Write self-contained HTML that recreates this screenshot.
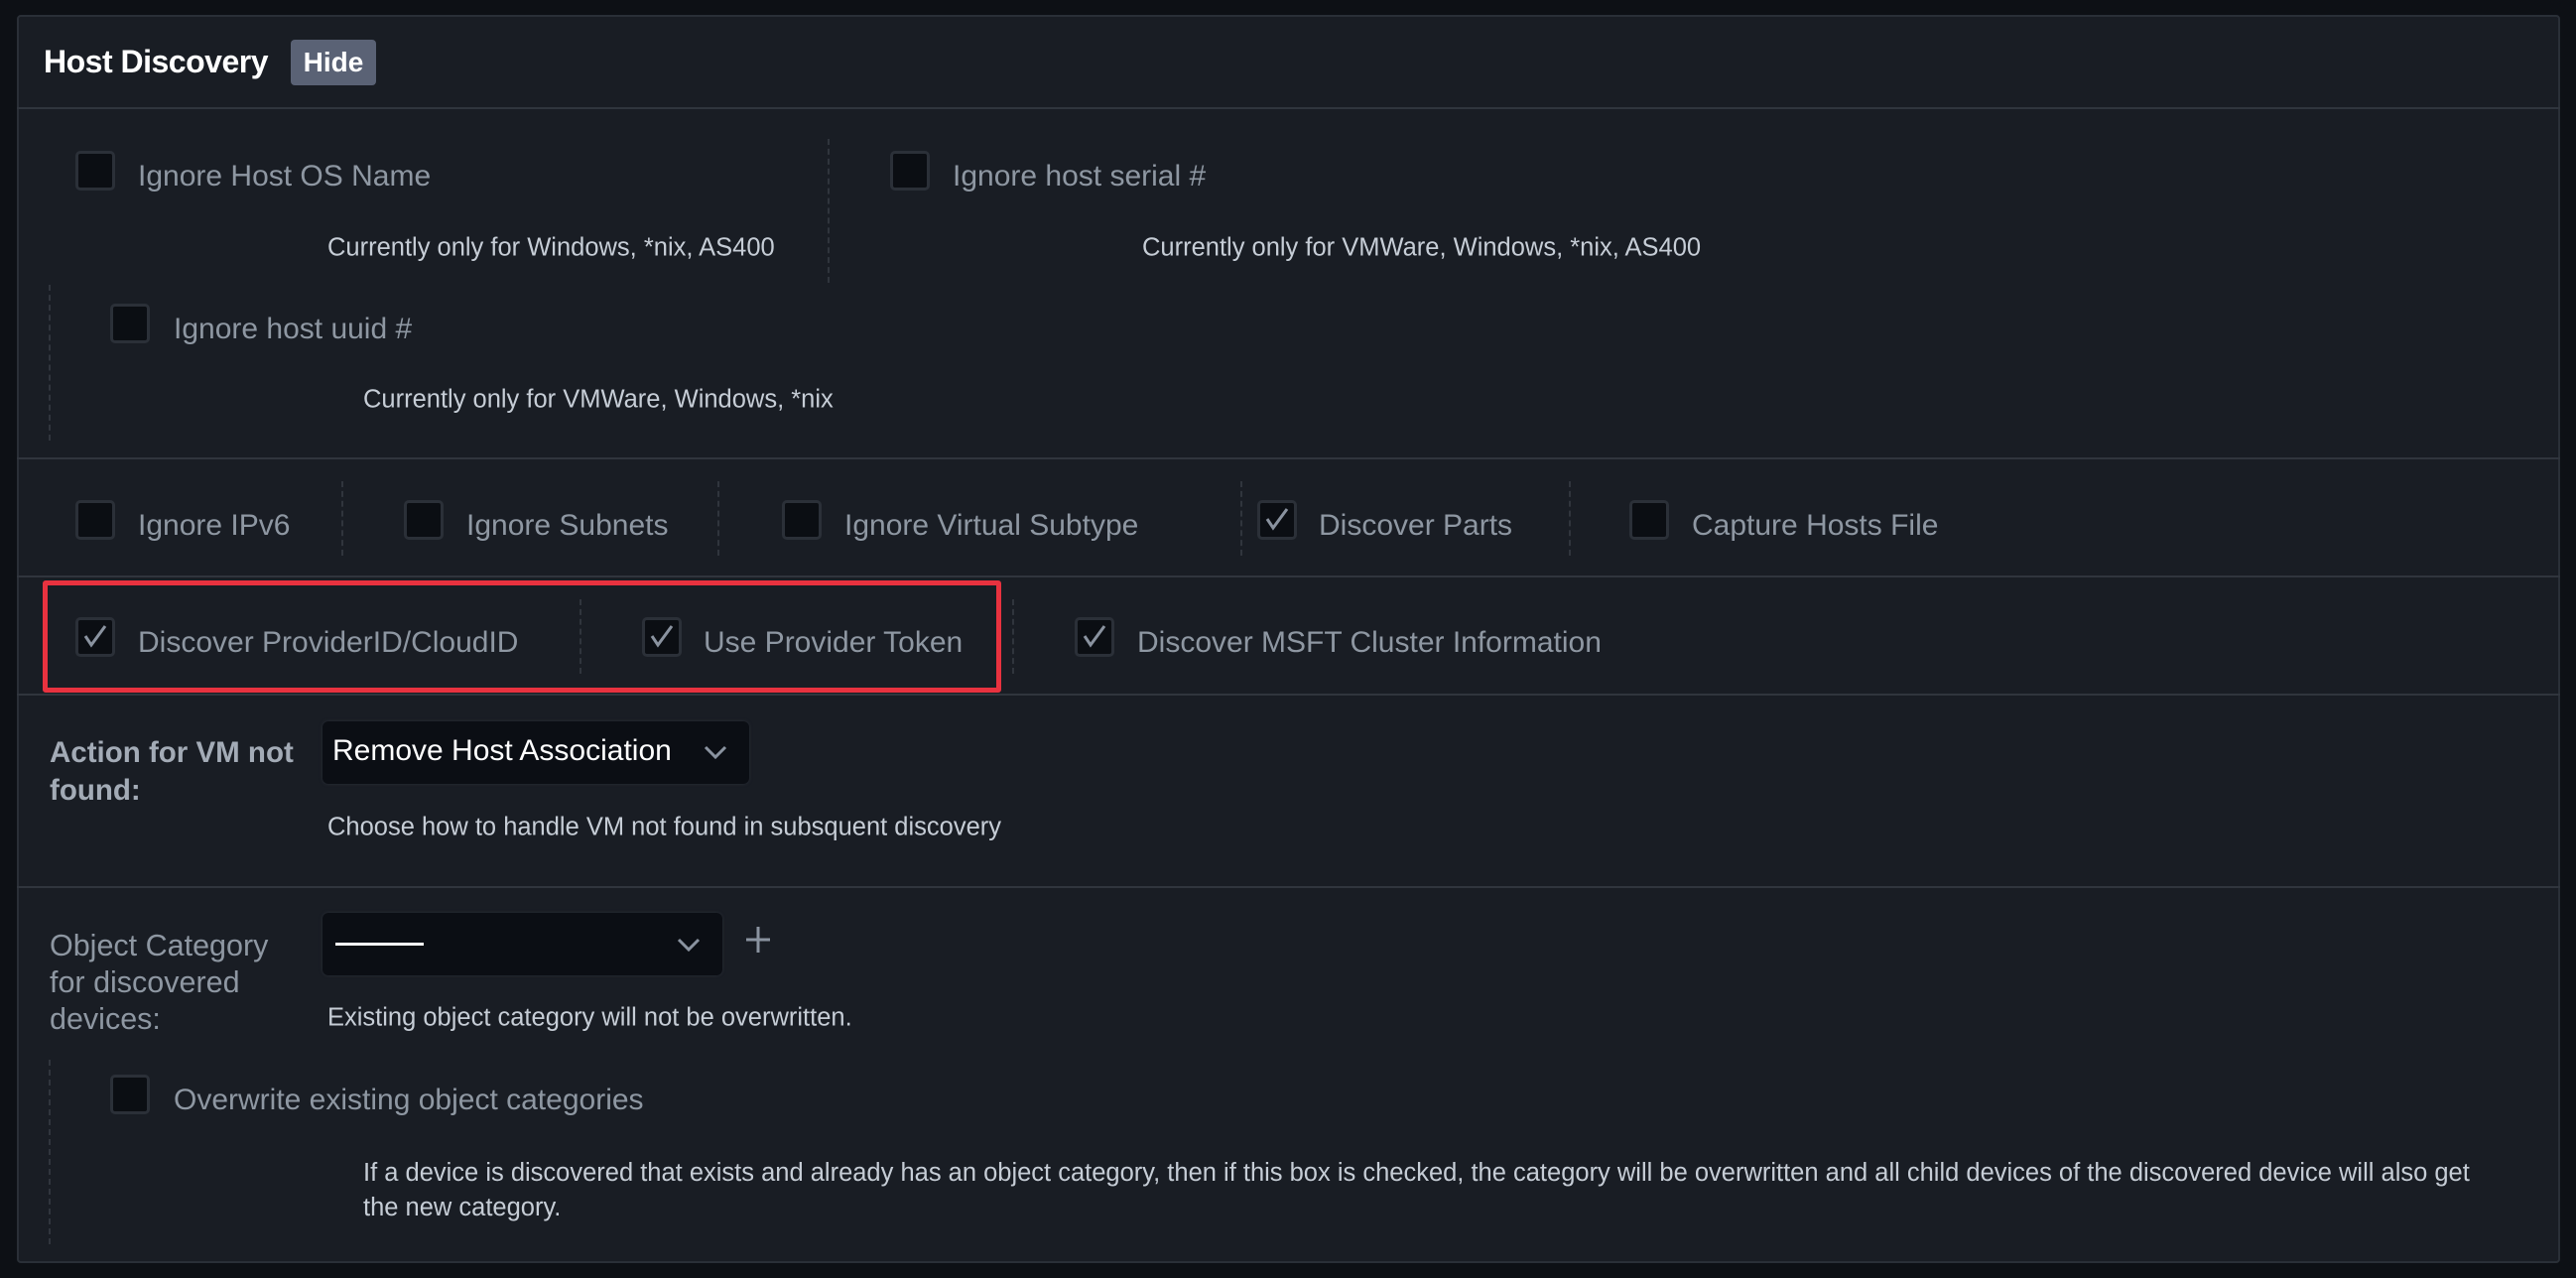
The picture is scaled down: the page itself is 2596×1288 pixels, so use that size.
<!DOCTYPE html>
<html><head><meta charset="utf-8"><style>
*{margin:0;padding:0;box-sizing:border-box}
body{width:2596px;height:1288px;background:#0d1015;font-family:"Liberation Sans",sans-serif;position:relative;overflow:hidden}
.panel{position:absolute;left:17px;top:15px;width:2563px;height:1258px;background:#191d24;border:2px solid #2a2f37;border-radius:4px}
.a{position:absolute;white-space:nowrap}
.hr{position:absolute;left:17px;width:2563px;height:2px;background:#30353d}
.dv{position:absolute;width:0;border-left:2px dashed #30353d}
.cb{position:absolute;width:40px;height:40px;background:#0b0e13;border:3px solid #2b3038;border-radius:5px}
.cb svg{position:absolute;left:3px;top:2px}
.lb{position:absolute;white-space:nowrap;font-size:30px;color:#8e97a2;transform:translateY(-50%)}
.sub{position:absolute;white-space:nowrap;font-size:25.5px;color:#c6cdd6;transform:translateY(-50%)}
.sel{position:absolute;background:#0b0e14;border-radius:6px;box-shadow:0 0 3px #2b3038}
</style></head><body>
<div class="panel"></div>
<div class="a" style="left:44px;top:44px;font-size:32px;font-weight:bold;color:#fff;letter-spacing:-0.5px">Host Discovery</div>
<div class="a" style="left:293px;top:40px;width:86px;height:46px;background:#5a6275;border-radius:4px;color:#fff;font-weight:bold;font-size:28px;text-align:center;line-height:46px">Hide</div>
<div class="hr" style="top:108px"></div>

<div class="cb" style="left:76px;top:152px"></div>
<div class="lb" style="left:139px;top:178px">Ignore Host OS Name</div>
<div class="sub" style="left:330px;top:250px">Currently only for Windows, *nix, AS400</div>
<div class="dv" style="left:834px;top:140px;height:145px"></div>
<div class="cb" style="left:897px;top:152px"></div>
<div class="lb" style="left:960px;top:178px">Ignore host serial #</div>
<div class="sub" style="left:1151px;top:250px">Currently only for VMWare, Windows, *nix, AS400</div>
<div class="dv" style="left:49px;top:287px;height:157px"></div>
<div class="cb" style="left:111px;top:306px"></div>
<div class="lb" style="left:175px;top:332px">Ignore host uuid #</div>
<div class="sub" style="left:366px;top:403px">Currently only for VMWare, Windows, *nix</div>
<div class="hr" style="top:461px"></div>

<div class="cb" style="left:76px;top:504px"></div>
<div class="lb" style="left:139px;top:530px">Ignore IPv6</div>
<div class="dv" style="left:344px;top:485px;height:75px"></div>
<div class="cb" style="left:407px;top:504px"></div>
<div class="lb" style="left:470px;top:530px">Ignore Subnets</div>
<div class="dv" style="left:723px;top:485px;height:75px"></div>
<div class="cb" style="left:788px;top:504px"></div>
<div class="lb" style="left:851px;top:530px">Ignore Virtual Subtype</div>
<div class="dv" style="left:1250px;top:485px;height:75px"></div>
<div class="cb" style="left:1267px;top:504px"><svg width="30" height="30" viewBox="0 0 30 30"><path d="M4 14 L10 23 L24 4" fill="none" stroke="#8a93a0" stroke-width="3"/></svg></div>
<div class="lb" style="left:1329px;top:530px">Discover Parts</div>
<div class="dv" style="left:1581px;top:485px;height:75px"></div>
<div class="cb" style="left:1642px;top:504px"></div>
<div class="lb" style="left:1705px;top:530px">Capture Hosts File</div>
<div class="hr" style="top:580px"></div>

<div class="cb" style="left:76px;top:622px"><svg width="30" height="30" viewBox="0 0 30 30"><path d="M4 14 L10 23 L24 4" fill="none" stroke="#8a93a0" stroke-width="3"/></svg></div>
<div class="lb" style="left:139px;top:648px">Discover ProviderID/CloudID</div>
<div class="dv" style="left:584px;top:604px;height:75px"></div>
<div class="cb" style="left:647px;top:622px"><svg width="30" height="30" viewBox="0 0 30 30"><path d="M4 14 L10 23 L24 4" fill="none" stroke="#8a93a0" stroke-width="3"/></svg></div>
<div class="lb" style="left:709px;top:648px">Use Provider Token</div>
<div class="dv" style="left:1020px;top:604px;height:75px"></div>
<div class="cb" style="left:1083px;top:622px"><svg width="30" height="30" viewBox="0 0 30 30"><path d="M4 14 L10 23 L24 4" fill="none" stroke="#8a93a0" stroke-width="3"/></svg></div>
<div class="lb" style="left:1146px;top:648px">Discover MSFT Cluster Information</div>
<div class="a" style="left:43px;top:585px;width:966px;height:113px;border:5px solid #e8323f;border-radius:3px"></div>
<div class="hr" style="top:699px"></div>

<div class="a" style="left:50px;top:740px;font-size:29.5px;font-weight:bold;color:#a3abb6;line-height:38px">Action for VM not<br>found:</div>
<div class="sel" style="left:325px;top:727px;width:430px;height:63px"></div>
<div class="a" style="left:335px;top:740px;font-size:30px;color:#fff">Remove Host Association</div>
<svg class="a" style="left:708px;top:748px" width="26" height="20" viewBox="0 0 26 20"><path d="M3 5 L13 15 L23 5" fill="none" stroke="#8a93a0" stroke-width="3"/></svg>
<div class="sub" style="left:330px;top:834px">Choose how to handle VM not found in subsquent discovery</div>
<div class="hr" style="top:893px"></div>

<div class="a" style="left:50px;top:935px;font-size:30.5px;color:#8e97a2;line-height:37px">Object Category<br>for discovered<br>devices:</div>
<div class="sel" style="left:325px;top:920px;width:403px;height:63px"></div>
<div class="a" style="left:338px;top:950px;width:89px;height:3px;background:#fff"></div>
<svg class="a" style="left:681px;top:942px" width="26" height="20" viewBox="0 0 26 20"><path d="M3 5 L13 15 L23 5" fill="none" stroke="#8a93a0" stroke-width="3"/></svg>
<svg class="a" style="left:750px;top:932px" width="28" height="30" viewBox="0 0 28 30"><path d="M14 2 V28 M2 15 H26" stroke="#8a93a0" stroke-width="3"/></svg>
<div class="sub" style="left:330px;top:1026px">Existing object category will not be overwritten.</div>
<div class="dv" style="left:49px;top:1068px;height:186px"></div>
<div class="cb" style="left:111px;top:1083px"></div>
<div class="lb" style="left:175px;top:1109px">Overwrite existing object categories</div>
<div class="a" style="left:366px;top:1165px;width:2200px;font-size:25.5px;color:#c6cdd6;line-height:35px;white-space:normal">If a device is discovered that exists and already has an object category, then if this box is checked, the category will be overwritten and all child devices of the discovered device will also get<br>the new category.</div>
</body></html>
